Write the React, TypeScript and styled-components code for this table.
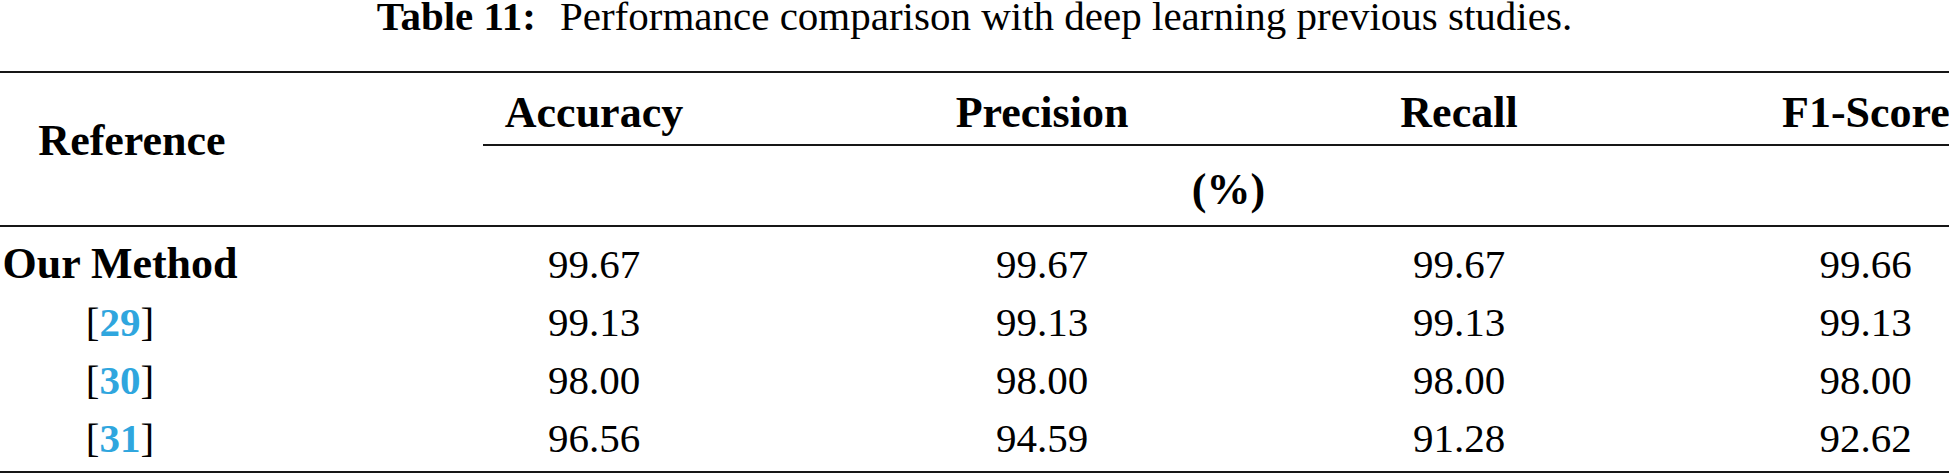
import React from "react";
import styled, { createGlobalStyle } from "styled-components";

const GlobalStyle = createGlobalStyle`
    html, body {
        margin: 0;
        padding: 0;
        background: #ffffff;
    }

    body {
        font-family: "Liberation Serif", "Times New Roman", serif;
        color: #000000;
        overflow: hidden;
    }
`;

// column widths picked so each column's centre sits where the reference has it
const COLUMNS = "240px 708px 188px 646px 1fr";

const Caption = styled.div`
    height: 32px;
    line-height: 32px;
    margin-bottom: 39px;
    font-size: 41px;
    text-align: center;
    white-space: nowrap;
`;

const CaptionLabel = styled.span`
    font-weight: 700;
    margin-right: 24px;
`;

const Rule = styled.div`
    height: 2px;
    background: #161616;
`;

const Head = styled.div`
    display: grid;
    grid-template-columns: ${COLUMNS};
    font-size: 44px;
    font-weight: 700;
    line-height: 46px;
`;

const RefHead = styled.div`
    grid-column: 1;
    grid-row: 1 / span 2;
    padding: 45px 0 0 24px;
    text-align: center;
`;

const ColHead = styled.div`
    padding-top: 17px;
    text-align: center;
    white-space: nowrap;
`;

const UnitRow = styled.div`
    grid-column: 2 / -1;
    margin: 8px 0 0 243px;
    padding: 21px 0 12px 24px;
    border-top: 2px solid #161616;
    text-align: center;
`;

const Body = styled.div`
    display: grid;
    grid-template-columns: ${COLUMNS};
    padding: 8px 0 4px;
    font-size: 41px;
    line-height: 58px;
`;

const Cell = styled.div<{ $strong?: boolean }>`
    text-align: center;
    white-space: nowrap;
    font-size: ${(p) => (p.$strong ? "44px" : "41px")};
    font-weight: ${(p) => (p.$strong ? 700 : 400)};
`;

const Cite = styled.span`
    color: #2fa6de;
    font-weight: 700;
`;

interface Row {
    name?: string;
    cite?: number;
    values: string[];
}

const headers = ["Accuracy", "Precision", "Recall", "F1-Score"];

const rows: Row[] = [
    { name: "Our Method", values: ["99.67", "99.67", "99.67", "99.66"] },
    { cite: 29, values: ["99.13", "99.13", "99.13", "99.13"] },
    { cite: 30, values: ["98.00", "98.00", "98.00", "98.00"] },
    { cite: 31, values: ["96.56", "94.59", "91.28", "92.62"] },
];

const App: React.FC = () => {
    return (
        <>
            <GlobalStyle />
            <Caption>
                <CaptionLabel>Table 11:</CaptionLabel>
                Performance comparison with deep learning previous studies.
            </Caption>
            <Rule />
            <Head>
                <RefHead>Reference</RefHead>
                {headers.map((h) => (
                    <ColHead key={h}>{h}</ColHead>
                ))}
                <UnitRow>(%)</UnitRow>
            </Head>
            <Rule />
            <Body>
                {rows.map((row, i) => (
                    <React.Fragment key={i}>
                        {row.name ? (
                            <Cell $strong>{row.name}</Cell>
                        ) : (
                            <Cell>
                                [<Cite>{row.cite}</Cite>]
                            </Cell>
                        )}
                        {row.values.map((v, j) => (
                            <Cell key={j}>{v}</Cell>
                        ))}
                    </React.Fragment>
                ))}
            </Body>
            <Rule />
        </>
    );
};

export default App;
